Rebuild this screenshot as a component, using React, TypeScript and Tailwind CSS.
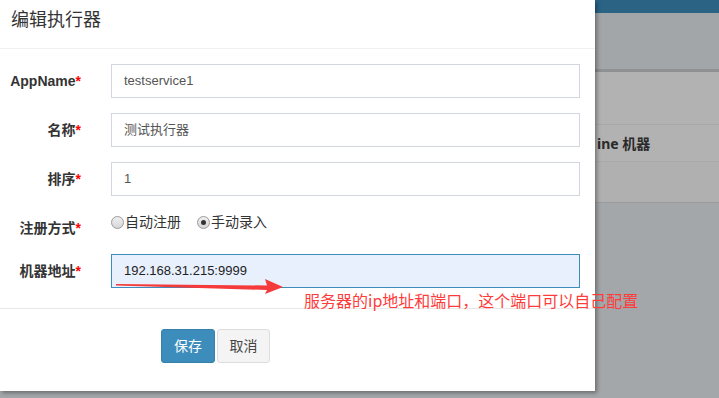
const Req = () => <span className="text-[#f00]">*</span>;

const Radio = ({ checked, label }: { checked?: boolean; label: string }) => (
  <label className="flex items-center">
    <span className="w-[13px] h-[13px] rounded-full border border-[#9a9a9a] bg-gradient-to-b from-[#f0f0f0] to-[#d6d6d6] flex items-center justify-center">
      {checked && <span className="w-[5px] h-[5px] rounded-full bg-[#333]" />}
    </span>
    <span className="ml-[1px]">{label}</span>
  </label>
);

const TextRow = ({
  label,
  value,
  active,
}: {
  label: string;
  value: string;
  active?: boolean;
}) => (
  <div className="flex h-[34px] mb-[15px]">
    <div className="w-[81px] text-right pt-[7px] leading-[20px] font-bold text-[14px] text-[#333]">
      {label}
      <Req />
    </div>
    <div
      className={
        active
          ? "ml-[30px] w-[469px] h-[34px] border border-[#3c8dbc] bg-[#e8f0fe] pl-[12px] flex items-center text-[13px] text-[#222]"
          : "ml-[30px] w-[469px] h-[34px] border border-[#d2d6de] bg-white pl-[12px] flex items-center text-[13px] text-[#555]"
      }
    >
      {value}
    </div>
  </div>
);

export default function App() {
  return (
    <div
      className="relative w-[719px] h-[398px] overflow-hidden bg-[#a4a7a9] flex"
      style={{ fontFamily: '"Liberation Sans", "Noto Sans CJK SC", sans-serif' }}
    >
      {/* modal */}
      <div className="w-[595px] h-[391px] bg-white shadow-[2px_2px_4px_rgba(0,0,0,0.35)] flex flex-col shrink-0 z-10">
        <div className="h-[49px] border-b border-[#f0f0f0] px-[11px] pt-[8px]">
          <div className="text-[18px] leading-[24px] text-[#333]">编辑执行器</div>
        </div>
        <div className="pt-[15px] pb-[5px] border-b border-[#e8e8e8]">
          <TextRow label="AppName" value="testservice1" />
          <TextRow label="名称" value="测试执行器" />
          <TextRow label="排序" value="1" />
          <div className="flex h-[28px] mb-[15px]">
            <div className="w-[81px] text-right pt-[7px] leading-[20px] font-bold text-[14px] text-[#333]">
              注册方式
              <Req />
            </div>
            <div className="ml-[30px] pt-[1px] leading-[20px] text-[14px] text-[#333] flex gap-[16px] items-start">
              <Radio label="自动注册" />
              <Radio checked label="手动录入" />
            </div>
          </div>
          <TextRow label="机器地址" value="192.168.31.215:9999" active />
        </div>
        <div className="pt-[20px] pl-[161px] flex gap-[2px]">
          <button className="w-[54px] h-[34px] rounded-[3px] bg-[#3c8dbc] border border-[#367fa9] text-white text-[14px]">
            保存
          </button>
          <button className="w-[53px] h-[34px] rounded-[3px] bg-[#f4f4f4] border border-[#ddd] text-[#444] text-[14px]">
            取消
          </button>
        </div>
      </div>

      {/* background page under overlay */}
      <div className="flex-1 flex flex-col">
        <div className="h-[13px] bg-[#2b6385]" />
        <div className="h-[56px] bg-[#a3a6a8]" />
        <div className="h-[3px] bg-[#8f9193]" />
        <div className="h-[53px] bg-[#b2b2b2] border-b border-[#a9a9a9]" />
        <div className="h-[37px] bg-[#b2b2b2] border-b border-[#a9a9a9] flex items-center pl-[2px] text-[14px] font-bold text-[#2a2a2a] whitespace-nowrap" style={{ fontFamily: '"Noto Sans", "Noto Sans CJK SC", sans-serif' }}>
          ine 机器
        </div>
        <div className="h-[41px] bg-[#b0b0b0] border-b border-[#9c9c9c]" />
      </div>

      {/* annotation */}
      <svg className="absolute left-0 top-0 w-[719px] h-[398px] pointer-events-none z-20" viewBox="0 0 719 398">
        <polygon
          points="116,284 267,285.5 265,279 283,287 265,294 267,290 116,285.5"
          fill="#f43a3a"
        />
      </svg>
      <div
        className="absolute left-[304px] top-[290px] z-20 text-[16px] leading-[20px] text-[#ff3c3c] whitespace-nowrap"
        style={{ fontFamily: '"Noto Sans CJK SC", sans-serif' }}
      >
        服务器的ip地址和端口，这个端口可以自己配置
      </div>
    </div>
  );
}
